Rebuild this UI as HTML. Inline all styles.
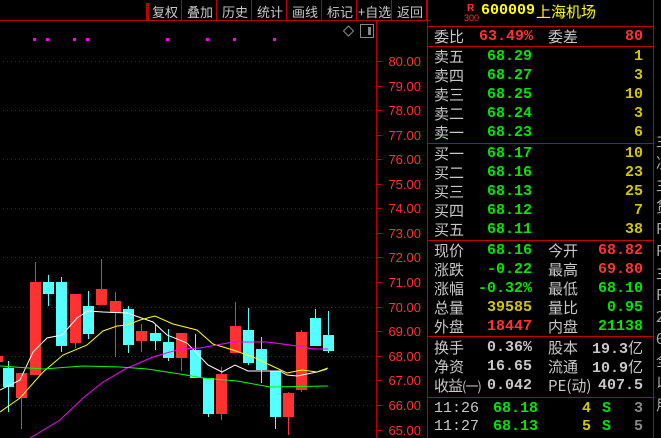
<!DOCTYPE html>
<html><head><meta charset="utf-8"><style>
html,body{margin:0;width:661px;height:438px;background:#000;overflow:hidden}
body{position:relative;font-family:"Liberation Sans","Noto Sans CJK SC",sans-serif}
.a{position:absolute;white-space:nowrap}
.top{color:#c8c8c8;font-size:13px;top:2px;font-family:"Noto Sans CJK SC",sans-serif}
.sep{position:absolute;top:0;width:1px;height:20px;background:#c00000}
.r{position:absolute;left:428px;width:225px;height:19px;font-size:15px;line-height:19px}
.l{position:absolute;left:6px;color:#c8c8c8;font-family:"Noto Sans CJK SC",sans-serif;font-size:15px}
.p{position:absolute;right:121px;font-weight:bold;font-family:"Liberation Mono",monospace;font-size:15px}
.l2{position:absolute;left:120px;color:#c8c8c8;font-family:"Noto Sans CJK SC",sans-serif;font-size:15px}
.v{position:absolute;right:10px;font-weight:bold;font-family:"Liberation Mono",monospace;font-size:15px}
.g{color:#00e600}.y{color:#d2c800}.rd{color:#ff3232}.w{color:#c8c8c8}
.hl{position:absolute;left:428px;width:225px;height:1px;background:#c00000}
</style></head><body>
<svg class="a" style="left:0;top:0" width="661" height="438">
<line x1="0" y1="20.5" x2="430" y2="20.5" stroke="#c00000"/>
<rect x="146" y="3" width="3" height="17" fill="#c00000"/>
<line x1="376.5" y1="20" x2="376.5" y2="438" stroke="#c00000"/>
<line x1="427.5" y1="0" x2="427.5" y2="438" stroke="#c00000"/>
<g stroke="#a00000" stroke-dasharray="1,3">
<line x1="3" y1="61.5" x2="372" y2="61.5"/><line x1="3" y1="110.5" x2="372" y2="110.5"/><line x1="3" y1="159.5" x2="372" y2="159.5"/><line x1="3" y1="208.5" x2="372" y2="208.5"/><line x1="3" y1="257.5" x2="372" y2="257.5"/><line x1="3" y1="307.5" x2="372" y2="307.5"/><line x1="3" y1="356.5" x2="372" y2="356.5"/><line x1="3" y1="405.5" x2="372" y2="405.5"/>
</g>
<g stroke="#c00000">
<line x1="376" y1="61.5" x2="381" y2="61.5"/><line x1="376" y1="86.5" x2="381" y2="86.5"/><line x1="376" y1="110.5" x2="381" y2="110.5"/><line x1="376" y1="135.5" x2="381" y2="135.5"/><line x1="376" y1="159.5" x2="381" y2="159.5"/><line x1="376" y1="184.5" x2="381" y2="184.5"/><line x1="376" y1="208.5" x2="381" y2="208.5"/><line x1="376" y1="233.5" x2="381" y2="233.5"/><line x1="376" y1="257.5" x2="381" y2="257.5"/><line x1="376" y1="282.5" x2="381" y2="282.5"/><line x1="376" y1="307.5" x2="381" y2="307.5"/><line x1="376" y1="331.5" x2="381" y2="331.5"/><line x1="376" y1="356.5" x2="381" y2="356.5"/><line x1="376" y1="380.5" x2="381" y2="380.5"/><line x1="376" y1="405.5" x2="381" y2="405.5"/><line x1="376" y1="430.5" x2="381" y2="430.5"/>
</g>
<g font-family="Liberation Sans" font-size="13" fill="#ff3232" text-anchor="end">
<text x="421" y="66">80.00</text><text x="421" y="91">79.00</text><text x="421" y="115">78.00</text><text x="421" y="140">77.00</text><text x="421" y="164">76.00</text><text x="421" y="189">75.00</text><text x="421" y="213">74.00</text><text x="421" y="238">73.00</text><text x="421" y="262">72.00</text><text x="421" y="287">71.00</text><text x="421" y="312">70.00</text><text x="421" y="336">69.00</text><text x="421" y="361">68.00</text><text x="421" y="385">67.00</text><text x="421" y="410">66.00</text><text x="421" y="435">65.00</text>
</g>
<g fill="#ff00ff"><rect x="33" y="38" width="3" height="3"/><rect x="46" y="38" width="3" height="3"/><rect x="73" y="38" width="3" height="3"/><rect x="86" y="38" width="3" height="3"/><rect x="166" y="38" width="3" height="3"/><rect x="206" y="38" width="3" height="3"/><rect x="233" y="38" width="3" height="3"/><rect x="273" y="38" width="3" height="3"/></g>
<path d="M348.5 26 L353.5 31 L348.5 36 L343.5 31 Z" fill="none" stroke="#888"/>
<rect x="360.5" y="24.5" width="13" height="13" fill="none" stroke="#888"/><rect x="368" y="27" width="3" height="8" fill="#888"/>
<g stroke-width="1">
<g stroke="#54ffff"><line x1="8.5" y1="361" x2="8.5" y2="412"/><line x1="48.5" y1="275" x2="48.5" y2="306"/><line x1="61.5" y1="277" x2="61.5" y2="352"/><line x1="88.5" y1="291" x2="88.5" y2="339"/><line x1="128.5" y1="306" x2="128.5" y2="353"/><line x1="155.5" y1="325" x2="155.5" y2="350"/><line x1="168.5" y1="329" x2="168.5" y2="361"/><line x1="195.5" y1="334" x2="195.5" y2="378"/><line x1="208.5" y1="378" x2="208.5" y2="417"/><line x1="248.5" y1="308" x2="248.5" y2="365"/><line x1="261.5" y1="337" x2="261.5" y2="383"/><line x1="275.5" y1="371" x2="275.5" y2="429"/><line x1="315.5" y1="309" x2="315.5" y2="346"/><line x1="328.5" y1="311" x2="328.5" y2="353"/></g>
<g stroke="#ff3232"><line x1="21.5" y1="373" x2="21.5" y2="429"/><line x1="35.5" y1="262" x2="35.5" y2="375"/><line x1="75.5" y1="294" x2="75.5" y2="348"/><line x1="101.5" y1="259" x2="101.5" y2="305"/><line x1="115.5" y1="292" x2="115.5" y2="357"/><line x1="141.5" y1="324" x2="141.5" y2="352"/><line x1="181.5" y1="333" x2="181.5" y2="371"/><line x1="221.5" y1="367" x2="221.5" y2="420"/><line x1="235.5" y1="302" x2="235.5" y2="353"/><line x1="288.5" y1="392" x2="288.5" y2="435"/><line x1="301.5" y1="330" x2="301.5" y2="392"/></g>
</g>
<g fill="#54ffff"><rect x="3" y="368" width="11" height="19"/><rect x="43" y="282" width="11" height="12"/><rect x="56" y="282" width="11" height="64"/><rect x="83" y="306" width="11" height="28"/><rect x="123" y="309" width="11" height="36"/><rect x="150" y="333" width="11" height="8"/><rect x="163" y="342" width="11" height="16"/><rect x="190" y="350" width="11" height="28"/><rect x="203" y="378" width="11" height="36"/><rect x="243" y="330" width="11" height="33"/><rect x="256" y="349" width="11" height="21"/><rect x="270" y="371" width="11" height="46"/><rect x="310" y="318" width="11" height="28"/><rect x="323" y="335" width="11" height="16"/></g>
<g fill="#ff3232"><rect x="0" y="356" width="3" height="6"/><rect x="16" y="373" width="11" height="25"/><rect x="30" y="282" width="11" height="93"/><rect x="70" y="294" width="11" height="49"/><rect x="96" y="289" width="11" height="16"/><rect x="110" y="301" width="11" height="12"/><rect x="136" y="331" width="11" height="10"/><rect x="176" y="333" width="11" height="25"/><rect x="216" y="374" width="11" height="40"/><rect x="230" y="326" width="11" height="27"/><rect x="283" y="393" width="11" height="24"/><rect x="296" y="332" width="11" height="58"/></g>
<g fill="none" stroke-width="1">
<polyline stroke="#fff" points="0,390 20,380 33,352 47,338 62,335 77,318 88,311 103,312 127,313 153,322 167,335 187,343 208,365 222,372 235,365 248,371 280,371 287,375 297,376 317,372 327,369"/>
<polyline stroke="#ffff00" points="0,412 20,398 43,372 63,355 87,345 103,331 117,326 127,325 140,320 155,316 173,324 197,330 213,344 233,350 253,357 270,365 287,373 302,370 317,372 328,368"/>
<polyline stroke="#ff00ff" points="30,438 60,420 83,398 103,382 127,368 153,357 180,349 200,348 233,342 267,342 297,346 313,349 328,349"/>
<polyline stroke="#00ff00" points="0,366 43,369 83,366 120,367 147,369 180,374 203,378 237,381 270,387 328,386"/>
</g>
<line x1="653.5" y1="0" x2="653.5" y2="438" stroke="#c00000"/>
</svg>
<div class="sep" style="left:181px"></div><div class="sep" style="left:216px"></div><div class="sep" style="left:251px"></div><div class="sep" style="left:286px"></div><div class="sep" style="left:321px"></div><div class="sep" style="left:356px"></div><div class="sep" style="left:391px"></div><div class="sep" style="left:426px"></div>
<div class="a top" style="left:152px">复权</div><div class="a top" style="left:187px">叠加</div><div class="a top" style="left:222px">历史</div><div class="a top" style="left:257px">统计</div><div class="a top" style="left:292px">画线</div><div class="a top" style="left:327px">标记</div><div class="a top" style="left:358px">+自选</div><div class="a top" style="left:397px">返回</div>

<div class="a" style="left:467px;top:3px;color:#ff3232;font-size:10px;font-weight:bold">R</div>
<div class="a" style="left:464px;top:13px;color:#ff3232;font-size:9px">300</div>
<div class="a" style="left:481px;top:2px;color:#ffff00;font-size:15px;font-weight:bold;font-family:'Liberation Mono',monospace">600009</div>
<div class="a" style="left:536px;top:1px;color:#ffff00;font-size:15px;font-family:'Noto Sans CJK SC',sans-serif">上海机场</div>
<div class="hl" style="top:26px"></div>
<div class="r" style="top:27px"><span class="l">委比</span><span class="p rd" style="right:120px">63.49%</span><span class="l2">委差</span><span class="v rd">80</span></div>
<div class="hl" style="top:46px"></div>
<div class="r" style="top:47px"><span class="l">卖五</span><span class="p g">68.29</span><span class="v y">1</span></div>
<div class="r" style="top:66px"><span class="l">卖四</span><span class="p g">68.27</span><span class="v y">3</span></div>
<div class="r" style="top:85px"><span class="l">卖三</span><span class="p g">68.25</span><span class="v y">10</span></div>
<div class="r" style="top:104px"><span class="l">卖二</span><span class="p g">68.24</span><span class="v y">3</span></div>
<div class="r" style="top:123px"><span class="l">卖一</span><span class="p g">68.23</span><span class="v y">6</span></div>
<div class="hl" style="top:143px"></div>
<div class="r" style="top:144px"><span class="l">买一</span><span class="p g">68.17</span><span class="v y">10</span></div>
<div class="r" style="top:163px"><span class="l">买二</span><span class="p g">68.16</span><span class="v y">23</span></div>
<div class="r" style="top:182px"><span class="l">买三</span><span class="p g">68.13</span><span class="v y">25</span></div>
<div class="r" style="top:201px"><span class="l">买四</span><span class="p g">68.12</span><span class="v y">7</span></div>
<div class="r" style="top:220px"><span class="l">买五</span><span class="p g">68.11</span><span class="v y">38</span></div>
<div class="hl" style="top:240px"></div>
<div class="r" style="top:241px"><span class="l">现价</span><span class="p g">68.16</span><span class="l2">今开</span><span class="v rd">68.82</span></div>
<div class="r" style="top:260px"><span class="l">涨跌</span><span class="p g">-0.22</span><span class="l2">最高</span><span class="v rd">69.80</span></div>
<div class="r" style="top:279px"><span class="l">涨幅</span><span class="p g">-0.32%</span><span class="l2">最低</span><span class="v g">68.10</span></div>
<div class="r" style="top:298px"><span class="l">总量</span><span class="p y">39585</span><span class="l2">量比</span><span class="v g">0.95</span></div>
<div class="r" style="top:317px"><span class="l">外盘</span><span class="p rd">18447</span><span class="l2">内盘</span><span class="v g">21138</span></div>
<div class="hl" style="top:336px"></div>
<div class="r" style="top:338px"><span class="l">换手</span><span class="p w">0.36%</span><span class="l2">股本</span><span class="v w">19.3<span style="font-family:'Noto Sans CJK SC';font-weight:normal">亿</span></span></div>
<div class="r" style="top:357px"><span class="l">净资</span><span class="p w">16.65</span><span class="l2">流通</span><span class="v w">10.9<span style="font-family:'Noto Sans CJK SC';font-weight:normal">亿</span></span></div>
<div class="r" style="top:376px"><span class="l" style="letter-spacing:-1px">收益<span style="font-size:13px">(一)</span></span><span class="p w">0.042</span><span class="l2">PE(动)</span><span class="v w">407.5</span></div>
<div class="hl" style="top:397px"></div>
<div class="r" style="top:399px"><span class="l" style="font-family:'Liberation Mono',monospace">11:26</span><span class="p g" style="right:115px">68.18</span><span class="v y" style="right:62px">4</span><span class="v g" style="right:42px">S</span><span class="v" style="color:#888">3</span></div>
<div class="r" style="top:417px"><span class="l" style="font-family:'Liberation Mono',monospace">11:27</span><span class="p g" style="right:115px">68.13</span><span class="v y" style="right:62px">5</span><span class="v g" style="right:42px">S</span><span class="v" style="color:#888">5</span></div>
<div class="a" style="left:656px;top:0;width:5px;height:438px;box-sizing:border-box;color:#aaa;font-size:15px;overflow:hidden;line-height:22px;padding-top:130px;font-family:'Noto Sans CJK SC'">主<br>决<br>主<br>货<br>R<br>R<br>主<br>R<br>2<br>6<br>全<br>以<br>用</div>
</body></html>
